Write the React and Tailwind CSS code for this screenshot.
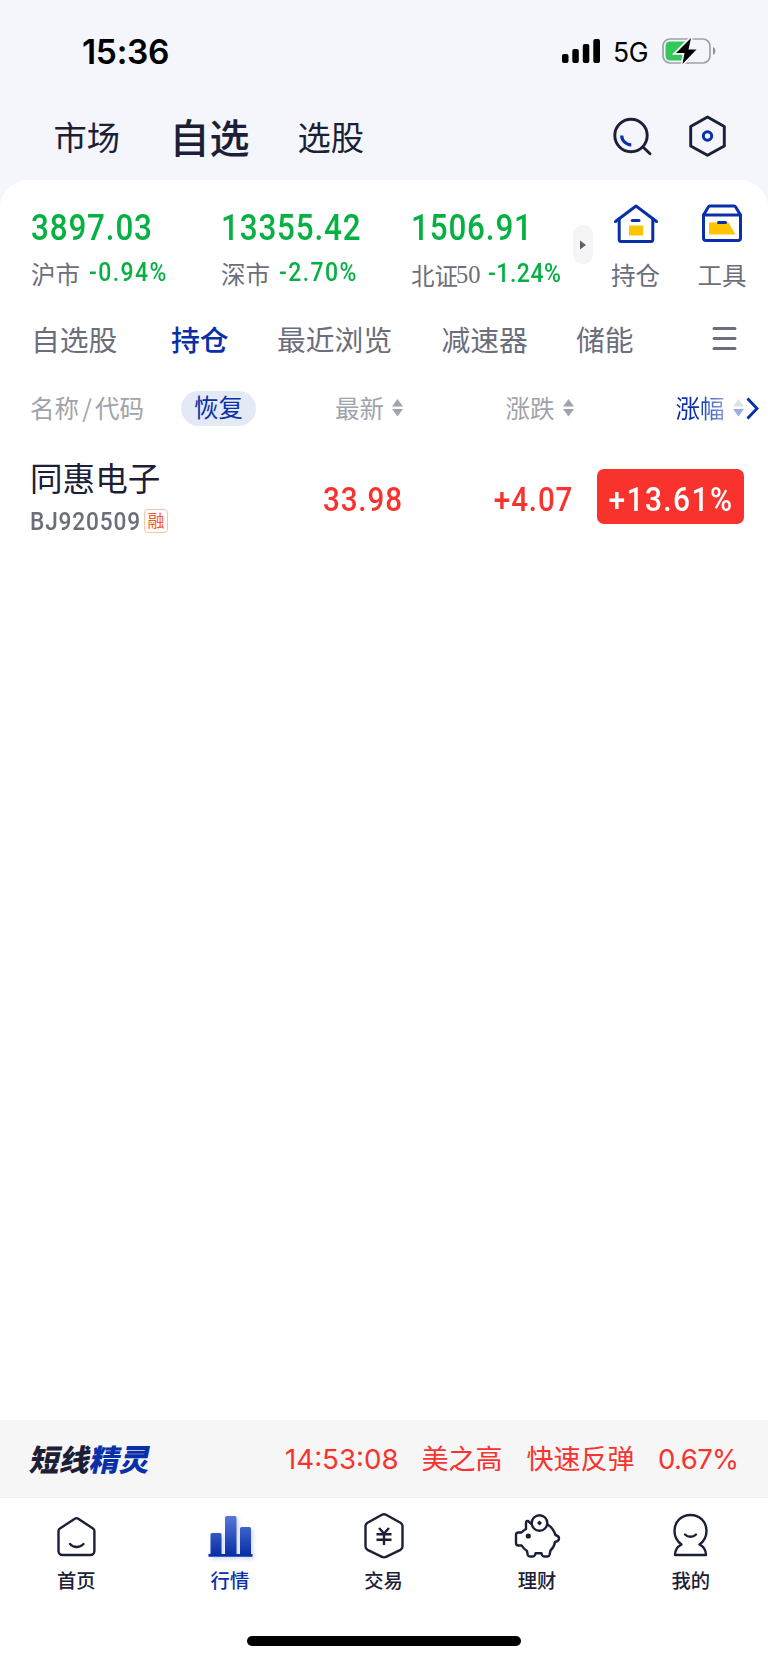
import React, { useState } from 'react';
import clsx from 'clsx';

const indices = [
  { value: '3897.03', name: '沪市', change: '-0.94%' },
  { value: '13355.42', name: '深市', change: '-2.70%' },
  { value: '1506.91', name: '北证', suffix: '50', change: '-1.24%' },
];

const groups = [
  { name: '自选股', width: 'w-[140px]' },
  { name: '持仓', width: 'w-[106px]' },
  { name: '最近浏览', width: 'w-[164.5px]' },
  { name: '减速器', width: 'w-[134.5px]' },
  { name: '储能', width: 'w-[136px]' },
];

const StatusBar = () => (
  <div className="flex h-[102px] items-center pl-[82px] font-['Inter',sans-serif] text-black">
    <span className="w-[480px] pt-[3px] text-[33.5px] font-semibold leading-none tracking-[-0.3px]">15:36</span>
    <svg width="39" height="25" viewBox="0 0 39 25" fill="currentColor">
      <rect x="0" y="15" width="6.5" height="9" rx="2" />
      <rect x="10.3" y="10" width="6.5" height="14" rx="2" />
      <rect x="20.8" y="5" width="6.5" height="19" rx="2" />
      <rect x="31.3" y="0" width="6.7" height="24" rx="2" />
    </svg>
    <span className="ml-3 w-[49px] pt-[3px] text-[26.5px] leading-none tracking-[-0.3px]">5G</span>
    <svg width="54" height="28" viewBox="0 0 54 28">
      <rect x="1" y="2" width="47" height="24" rx="7" fill="none" stroke="#a0a1a5" strokeWidth="1.7" />
      <path d="M8 4.5h19v19H8a4.500 4.500 0 0 1-4.500-4.500V9A4.500 4.500 0 0 1 8 4.500z" fill="#34c759" />
      <path d="M27.500 4.500L23 23.500h7V4.500z" fill="#f4f6fb" />
      <path d="M51 10c3.200 1.500 3.200 6.500 0 8z" fill="#8e8f93" />
      <path d="M29 1L14 16h8.500L20.500 27 34.500 12.500H26.500z" fill="#000" stroke="#f4f6fb" strokeWidth="3.500" paintOrder="stroke" />
    </svg>
  </div>
);

const Header = () => (
  <div className="flex h-[78px] items-center pl-[53.5px] pb-[10px] text-[33.3px] leading-none text-[#1b2037]">
    <span className="w-[116px]">市场</span>
    <span className="w-[128px] text-[40px] font-medium">自选</span>
    <span className="w-[315px]">选股</span>
    <svg width="40" height="40" viewBox="0 0 40 40" fill="none" strokeWidth="2.900" strokeLinecap="round">
      <circle cx="18" cy="19.500" r="16.200" stroke="#1b2037" />
      <path d="M30.500 31.500l6.500 6.200" stroke="#1b2037" />
      <path d="M8.700 19.500a9.500 9.500 0 0 0 9.600 9.300" stroke="#0930a8" strokeWidth="3.200" strokeLinecap="butt" />
    </svg>
    <svg className="ml-[35px]" width="40" height="42" viewBox="0 0 40 42" fill="none" strokeWidth="2.900">
      <path d="M19.500 2l16.800 9.500v19.400L19.500 40.300 2.700 30.900V11.500z" stroke="#1b2037" strokeLinejoin="round" />
      <circle cx="19.500" cy="21" r="4.200" stroke="#0930a8" strokeWidth="3" />
    </svg>
  </div>
);

const HoldingIcon = () => (
  <svg width="46" height="40" viewBox="0 0 46 40" fill="none" stroke="#0930a8" strokeWidth="3" strokeLinecap="round" strokeLinejoin="round">
    <path d="M2.500 18.500L23 3l20.500 15.500" />
    <path d="M6.200 16V36.500a2 2 0 0 0 2 2h29.600a2 2 0 0 0 2-2V16" />
    <path d="M16 22.500h14v10H16z" fill="#ffc400" stroke="none" />
    <path d="M19.200 17.500h6.800" />
  </svg>
);

const ToolIcon = () => (
  <svg width="42" height="38" viewBox="0 0 42 38" fill="none" stroke="#0930a8" strokeWidth="3" strokeLinecap="round" strokeLinejoin="round">
    <path d="M2.500 11L7.500 2.800a1.500 1.500 0 0 1 1.200-.7h24.600a1.500 1.500 0 0 1 1.200.7l5 8.200z" />
    <path d="M2.500 11v23a2.500 2.500 0 0 0 2.500 2.500h32a2.500 2.500 0 0 0 2.500-2.500V11" />
    <path d="M8 18.500h19.500l7 12H8z" fill="#ffc400" stroke="none" />
    <path d="M17.500 18.500h7" />
  </svg>
);

const MarketIndices = () => (
  <div className="flex h-[116px] pl-[31px] text-[24.5px] leading-none">
    {indices.map((item) => (
      <div key={item.name} className="w-[190px] shrink-0 pt-[29.5px]">
        <div className="origin-left scale-x-86 whitespace-nowrap font-['Roboto',sans-serif] text-[36.5px] font-medium leading-[36px] tracking-[1px] text-[#07b043]">
          {item.value}
        </div>
        <div className="mt-[13.5px] flex h-7 items-center whitespace-nowrap">
          <span className={clsx('pt-[3px] text-[#6b6e7b]', item.suffix && 'pt-[5px] text-[23.5px]')}>{item.name}</span>
          {item.suffix && (
            <span className="-ml-[2px] pt-[5px] font-['Liberation_Serif',serif] text-[#6b6e7b]">{item.suffix}</span>
          )}
          <span
            className={clsx(
              "origin-left scale-x-90 font-['Roboto',sans-serif] text-[25.5px] font-medium text-[#07b043]",
              item.suffix ? 'ml-[7px] pt-[2px] tracking-[0.6px]' : 'ml-[9px] tracking-[1.6px]'
            )}
          >
            {item.change}
          </span>
        </div>
      </div>
    ))}
    <div className="-ml-[28.5px] mt-[45px] flex h-[39px] w-5 shrink-0 items-center justify-center rounded-[9px] bg-[#f5f5f6]">
      <svg width="6" height="10" viewBox="0 0 6 10" fill="#5d606c">
        <path d="M0 0.500L6 5 0 9.500z" />
      </svg>
    </div>
    <div className="ml-[18px] flex w-[50px] shrink-0 flex-col items-center pt-[23px] text-[#6b6e7b]">
      <HoldingIcon />
      <span className="mt-5">持仓</span>
    </div>
    <div className="ml-[36.5px] flex w-[50px] shrink-0 flex-col items-center pt-[24px] text-[#6b6e7b]">
      <ToolIcon />
      <span className="mt-[21px]">工具</span>
    </div>
  </div>
);

const GroupTabs = ({ active, onSelect }) => (
  <div className="flex h-[86px] items-center pl-[31px] text-[28.8px] leading-none text-[#6b6e7b]">
    {groups.map((group) => (
      <button
        key={group.name}
        onClick={() => onSelect(group.name)}
        className={clsx('shrink-0 whitespace-nowrap text-left', group.width, group.name === active && 'font-medium text-[#0930a8]')}
      >
        {group.name}
      </button>
    ))}
    <svg width="25" height="24" viewBox="0 0 25 24" stroke="#6b6e7b" strokeWidth="3" strokeLinecap="round">
      <path d="M2 1.500h21M2 11.500h21M2 21.500h21" />
    </svg>
  </div>
);

const SortIcon = ({ up = '#a1a3ab', down = '#a1a3ab' }) => (
  <svg className="ml-2" width="11" height="18" viewBox="0 0 11 18">
    <path d="M5.500 0L11 7.500H0z" fill={up} />
    <path d="M0 10h11l-5.500 7.500z" fill={down} />
  </svg>
);

const TableHead = () => (
  <div className="flex h-[52px] items-center pl-[30px] text-[24.5px] leading-none text-[#a1a3ab]">
    <div className="flex w-[151px] whitespace-nowrap">
      名称<span className="w-4 text-center">/</span>代码
    </div>
    <button className="h-[35px] w-[75px] rounded-full bg-[#e4e9f6] pb-px text-[#0930a8]">恢复</button>
    <div className="ml-[79px] flex w-[170.5px] items-center">最新<SortIcon /></div>
    <div className="flex w-[170px] items-center">涨跌<SortIcon /></div>
    <div className="flex items-center">
      <span className="bg-linear-to-r from-[#0930a8] from-45% to-[#94a6dc] bg-clip-text py-1 text-transparent">涨幅</span>
      <SortIcon up="#e0e1e5" down="#9cafe0" />
      <svg className="ml-[2px]" width="14" height="23" viewBox="0 0 14 23" fill="none" stroke="#0930a8" strokeWidth="2.900">
        <path d="M1.500 1.500L11 11.500 1.500 21.500" />
      </svg>
    </div>
  </div>
);

const StockRow = () => (
  <div className="flex h-[124px] items-center pl-[30px] font-['Roboto','Noto_Sans_CJK_SC',sans-serif] text-[34px] font-medium leading-none tracking-[1px] text-[#f8332e]">
    <div className="w-[293px] pt-[6px]">
      <div className="text-[32.6px] font-normal tracking-normal text-[#1b2037]">同惠电子</div>
      <div className="mt-3 flex items-center gap-[5px] text-[#6b6e7b]">
        <span className="w-[109px] origin-left scale-x-86 whitespace-nowrap text-[26.3px]">BJ920509</span>
        <span className="flex h-6 w-6 items-center justify-center rounded-[4px] border-[1.5px] border-[#ffc0ad] text-[17px] font-normal tracking-normal text-[#f8552c]">融</span>
      </div>
    </div>
    <span className="w-[79px] pt-[5px]">
      <span className="inline-block origin-left scale-x-87">33.98</span>
    </span>
    <span className="w-[171px] pt-[5px] text-right">
      <span className="inline-block origin-right scale-x-87">+4.07</span>
    </span>
    <span className="ml-[24px] flex h-[55px] w-[147px] items-center justify-center rounded-[7px] bg-[#f8332e] text-white">
      <span className="scale-x-88 pt-[5px] tracking-[1.6px]">+13.61%</span>
    </span>
  </div>
);

const AlertBar = () => (
  <div className="flex h-[78px] items-center border-b border-[#efeff0] bg-[#f6f6f7] pl-[31px] text-[27px] leading-none text-[#f8332e]">
    <div className="w-[254px] -skew-x-12 pb-[2px] text-[30px] font-black text-[#1b2037]">
      短线<span className="text-[#0930a8]">精灵</span>
    </div>
    <div className="flex shrink-0 items-center whitespace-nowrap pt-[3px] font-['Inter','Noto_Sans_CJK_SC',sans-serif]">
      <span className="w-[136.5px] text-[27.7px]">14:53:08</span>
      <span className="w-[105px]">美之高</span>
      <span className="w-[131.5px]">快速反弹</span>
      <span className="text-[27.5px] tracking-[-0.6px]">0.67%</span>
    </div>
  </div>
);

const navIconProps = {
  width: 48,
  height: 48,
  viewBox: '0 0 48 48',
  fill: 'none',
  stroke: 'currentColor',
  strokeWidth: 2.4,
  strokeLinecap: 'round',
  strokeLinejoin: 'round',
};

const navItems = [
  {
    name: '首页',
    icon: (
      <svg {...navIconProps}>
        <path d="M21.800 6.700a3 3 0 0 1 3.400 0L40 16.500a3 3 0 0 1 1.400 2.500V39a4 4 0 0 1-4 4H9.500a4 4 0 0 1-4-4V19a3 3 0 0 1 1.400-2.500z" />
        <path d="M17 32c3.500 4 9.500 4 13.500 0" />
      </svg>
    ),
  },
  {
    name: '行情',
    icon: (
      <svg {...navIconProps} className="drop-shadow-[2px_2px_2px_rgba(9,48,168,0.2)]" stroke="none">
        <defs>
          <linearGradient id="bars" x1="0" y1="4" x2="0" y2="42" gradientUnits="userSpaceOnUse">
            <stop offset="0" stopColor="#5878d8" />
            <stop offset="1" stopColor="#0930a8" />
          </linearGradient>
        </defs>
        <path d="M4.500 22.500a1.500 1.500 0 0 1 1.500-1.500h8a1.500 1.500 0 0 1 1.500 1.500v20h-11zM19 5.500a1.500 1.500 0 0 1 1.500-1.500h8.500A1.500 1.500 0 0 1 30.500 5.500v37H19zM34 16.500a1.500 1.500 0 0 1 1.500-1.500h8a1.500 1.500 0 0 1 1.500 1.500v26H34z" fill="url(#bars)" />
        <path d="M2.500 42h44v2.700h-44z" fill="#0930a8" />
      </svg>
    ),
  },
  {
    name: '交易',
    icon: (
      <svg {...navIconProps}>
        <path d="M22 2.800a4 4 0 0 1 4 0L40.500 10.800a4 4 0 0 1 2 3.500v20a4 4 0 0 1-2 3.500L26 44.800a4 4 0 0 1-4 0L7.500 37.800a4 4 0 0 1-2-3.500V14.300a4 4 0 0 1 2-3.500z" />
        <path d="M19 16l5 5.500 5-5.500M16.500 22.300h15M16.500 27.800h15M24 21.500v11.500" strokeLinecap="butt" />
      </svg>
    ),
  },
  {
    name: '理财',
    icon: (
      <svg {...navIconProps}>
        <circle cx="25.500" cy="11" r="7.800" />
        <path d="M24.500 11h2M25.500 10v2" />
        <path d="M17.500 12l-3.500-3c-1.500-.5-2 .5-2 2v6c-2 1-3.500 2.500-4.500 3.500H4.500c-1.500 0-2.500 1-2.500 2.500v8c0 1.500 1 2.500 2.500 2.500h3.200c1.500 2.500 3 4 5.300 5.500l.8 4c.3 1 1 1.500 2 1.500H19c1 0 1.500-.5 2-1.500l.5-1.800h6l.5 1.800c.5 1 1 1.500 2 1.500h3.500c1 0 1.700-.5 2-1.500l1-4.500c2.700-2.500 4-5 4.500-8.500 2.500-.5 4-1.500 4-3.500s-1.500-3-3.500-3.500c-1.500-4.500-3.500-8-8-10.500" />
        <circle cx="14.300" cy="24" r="1.400" fill="currentColor" />
      </svg>
    ),
  },
  {
    name: '我的',
    icon: (
      <svg {...navIconProps}>
        <path d="M14.500 32.500C9 28.500 7.500 24.500 7.500 19 7.500 9.500 14.500 3 23.500 3s16 6.500 16 16c0 5.500-1.500 9.500-7 13.500 4 2 6.500 5.500 6.500 10.500h-31c0-5 2.500-8.500 6.500-10.500z" />
        <path d="M18 22.500c3 3 8 3 11 0" />
      </svg>
    ),
  },
];

const BottomNav = () => (
  <div className="grid h-[138px] grid-cols-5 pt-[14px]">
    {navItems.map((item) => (
      <div
        key={item.name}
        className={clsx('flex flex-col items-center text-[19.3px] font-medium leading-none', item.name === '行情' ? 'text-[#0930a8]' : 'text-[#1b2037]')}
      >
        {item.icon}
        <span className="mt-[11px] pr-px">{item.name}</span>
      </div>
    ))}
  </div>
);

const App = () => {
  const [activeGroup, setActiveGroup] = useState('持仓');

  return (
    <div className="flex h-[1663px] w-[768px] flex-col overflow-hidden bg-[#f4f6fb] font-['Noto_Sans_CJK_SC',sans-serif]">
      <StatusBar />
      <Header />
      <main className="flex flex-1 flex-col rounded-t-[28px] bg-white">
        <MarketIndices />
        <GroupTabs active={activeGroup} onSelect={setActiveGroup} />
        <TableHead />
        <StockRow />
        <div className="flex-1" />
        <AlertBar />
        <BottomNav />
        <div className="mb-[17px] h-[10px] w-[274px] self-center rounded-full bg-black" />
      </main>
    </div>
  );
};

export default App;
